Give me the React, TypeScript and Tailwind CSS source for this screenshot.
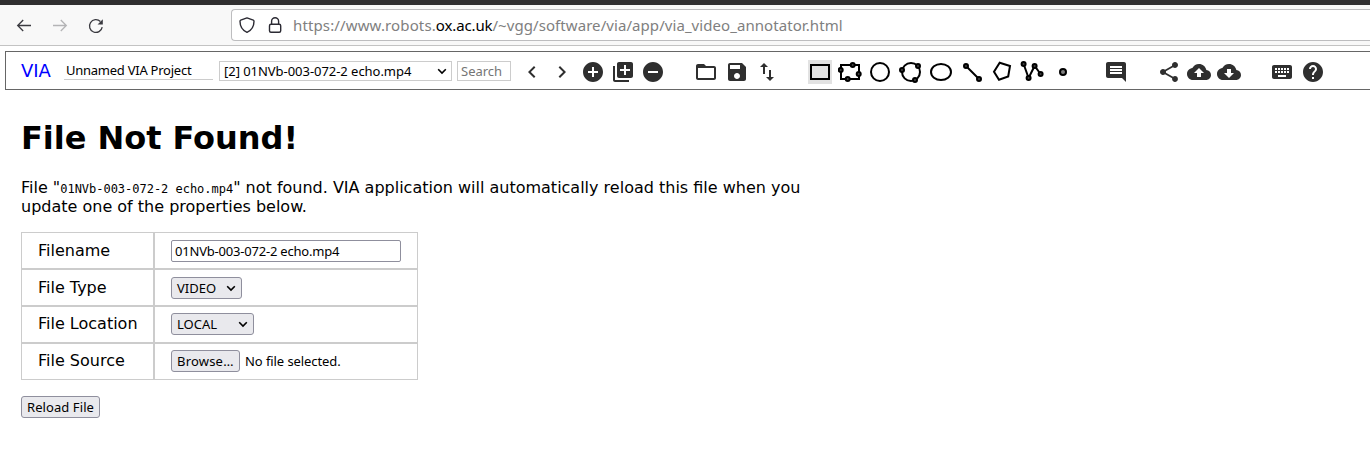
import type { ReactNode } from 'react';

const CIRCLE = 'M12 2C6.48 2 2 6.48 2 12s4.48 10 10 10 10-4.48 10-10S17.52 2 12 2z';
const CLOUD =
  'M19.35 10.04C18.67 6.59 15.64 4 12 4 9.11 4 6.6 5.64 5.35 8.04 2.34 8.36 0 10.91 0 14c0 3.31 2.69 6 6 6h13c2.76 0 5-2.24 5-5 0-2.64-2.05-4.78-4.65-4.96z';

const ICONS = {
  prev: 'M15.41 7.41L14 6l-6 6 6 6 1.41-1.41L10.83 12z',
  next: 'M10 6L8.59 7.41 13.17 12l-4.58 4.59L10 18l6-6z',
  add: CIRCLE + 'm5 11h-4v4h-2v-4H7v-2h4V7h2v4h4v2z',
  addMany:
    'M4 6H2v14c0 1.1.9 2 2 2h14v-2H4V6zm16-4H8c-1.1 0-2 .9-2 2v12c0 1.1.9 2 2 2h12c1.1 0 2-.9 2-2V4c0-1.1-.9-2-2-2zm-1 9h-4v4h-2v-4H9V9h4V5h2v4h4v2z',
  remove: CIRCLE + 'm5 11H7v-2h10v2z',
  open: 'M20 6h-8l-2-2H4c-1.1 0-1.99.9-1.99 2L2 18c0 1.1.9 2 2 2h16c1.1 0 2-.9 2-2V8c0-1.1-.9-2-2-2zm0 12H4V8h16v10z',
  save: 'M17 3H5c-1.11 0-2 .9-2 2v14c0 1.1.89 2 2 2h14c1.1 0 2-.9 2-2V7l-4-4zm-5 16c-1.66 0-3-1.34-3-3s1.34-3 3-3 3 1.34 3 3-1.34 3-3 3zm3-10H5V5h10v4z',
  transfer: 'M16 17.01V10h-2v7.01h-3L15 21l4-3.99h-3zM9 3L5 6.99h3V14h2V6.99h3L9 3z',
  comment:
    'M21.99 4c0-1.1-.89-2-1.99-2H4c-1.1 0-2 .9-2 2v12c0 1.1.9 2 2 2h14l4 4-.01-18zM18 14H6v-2h12v2zm0-3H6V9h12v2zm0-3H6V6h12v2z',
  share:
    'M18 16.08c-.76 0-1.44.3-1.96.77L8.91 12.7c.05-.23.09-.46.09-.7s-.04-.47-.09-.7l7.05-4.11c.54.5 1.25.81 2.04.81 1.66 0 3-1.34 3-3s-1.34-3-3-3-3 1.34-3 3c0 .24.04.47.09.7L8.04 9.81C7.5 9.31 6.79 9 6 9c-1.66 0-3 1.34-3 3s1.34 3 3 3c.79 0 1.5-.31 2.04-.81l7.12 4.16c-.05.21-.08.43-.08.65 0 1.61 1.31 2.92 2.92 2.92s2.92-1.31 2.92-2.92-1.31-2.92-2.92-2.92z',
  upload: CLOUD + 'M14 13v4h-4v-4H7l5-5 5 5h-3z',
  download: CLOUD + 'M17 13l-5 5-5-5h3V9h4v4h3z',
  keyboard:
    'M20 5H4c-1.1 0-1.99.9-1.99 2L2 17c0 1.1.9 2 2 2h16c1.1 0 2-.9 2-2V7c0-1.1-.9-2-2-2zm-9 3h2v2h-2V8zm0 3h2v2h-2v-2zM8 8h2v2H8V8zm0 3h2v2H8v-2zm-1 2H5v-2h2v2zm0-3H5V8h2v2zm9 7H8v-2h8v2zm0-4h-2v-2h2v2zm0-3h-2V8h2v2zm3 3h-2v-2h2v2zm0-3h-2V8h2v2z',
  help:
    CIRCLE +
    'm1 17h-2v-2h2v2zm2.07-7.75l-.9.92C13.45 12.9 13 13.5 13 15h-2v-.5c0-1.1.45-2.1 1.17-2.83l1.24-1.26c.37-.36.59-.86.59-1.41 0-1.1-.9-2-2-2s-2 .9-2 2H8c0-2.21 1.79-4 4-4s4 1.79 4 4c0 .88-.36 1.68-.93 2.25z',
};

function Icon({ name }: { name: keyof typeof ICONS }) {
  return (
    <button type="button" aria-label={name} className="size-6 shrink-0">
      <svg viewBox="0 0 24 24" className="size-6" fill="#2f2f2f" fillRule="evenodd">
        <path d={ICONS[name]} />
      </svg>
    </button>
  );
}

function Shape({ selected, points = [], children }: { selected?: boolean; points?: number[][]; children?: ReactNode }) {
  return (
    <button type="button" className={selected ? 'size-6 shrink-0 bg-[#e2e2e2]' : 'size-6 shrink-0'}>
      <svg viewBox="0 0 24 24" className="size-6" fill="none" stroke="#000" strokeWidth="2">
        {children}
        {points.map(([x, y]) => (
          <circle key={x} cx={x} cy={y} r="2" fill="#444" strokeWidth="2" />
        ))}
      </svg>
    </button>
  );
}

function Chevron() {
  return (
    <svg viewBox="0 0 10 10" className="size-[10px] shrink-0" fill="none" stroke="#000" strokeWidth="1.6">
      <path d="M1.2 3.2 5 7l3.8-3.8" />
    </svg>
  );
}

const control =
  "flex h-[22px] items-center rounded-[3px] border border-[#8f8f9d] bg-[#e9e9ed] px-[5px] font-['Noto_Sans',sans-serif] text-[13px] leading-none";

function Row({ label, raised, children }: { label: string; raised?: boolean; children: ReactNode }) {
  return (
    <div className="flex h-[37px]">
      <div className={'w-[133px] border border-[#ccc] pl-4 leading-[19px] ' + (raised ? 'pt-[7px]' : 'pt-2')}>{label}</div>
      <div className={'flex w-[264px] items-center border border-[#ccc] pl-4 ' + (raised ? 'pb-px' : 'pt-px')}>{children}</div>
    </div>
  );
}

export default function App() {
  return (
    <div className="h-[455px] w-full overflow-hidden bg-white font-['DejaVu_Sans',sans-serif] text-base text-black">
      <div className="h-[5px] bg-[#302f30]" />
      <header className="flex h-[41px] items-center border-b border-[#c3c3c3] bg-[#f8f8f8]">
        <nav className="flex w-[231px] shrink-0 items-center pl-4 pt-px">
          <svg viewBox="0 0 16 16" className="size-4" fill="none" stroke="#3a3a40" strokeWidth="1.3">
            <path d="M15 7.500H1.700M7.200 2 1.700 7.500l5.500 5.500" />
          </svg>
          <svg viewBox="0 0 16 16" className="ml-5 size-4" fill="none" stroke="#b4b4b6" strokeWidth="1.3">
            <path d="M1 7.500h13.300M8.800 2l5.500 5.500-5.500 5.500" />
          </svg>
          <svg viewBox="0 0 16 16" className="ml-5 size-4" fill="none" stroke="#3a3a40" strokeWidth="1.3">
            <path d="M14.2 9.1A6.4 6.4 0 1 1 12.4 3.5" />
            <path d="M14.8 1.200v5.200H9.600z" fill="#3a3a40" stroke="none" />
          </svg>
        </nav>
        <div className="flex h-8 flex-1 items-center rounded-l border border-r-0 border-[#bdbdbf] bg-white pl-[7px]">
          <svg viewBox="0 0 16 16" className="size-4" fill="none" stroke="#2b2a33" strokeWidth="1.4" strokeLinejoin="round">
            <path d="M8 .9 14.3 3.2c.5.2.7.5.7 1C15 9.200 12 13.500 8 15.300 4 13.500 1 9.200 1 4.200c0-.5.200-.8.700-1z" />
          </svg>
          <svg viewBox="0 0 16 16" className="ml-3 size-4" fill="none" stroke="#2b2a33" strokeWidth="1.4">
            <rect x="2.500" y="7.300" width="11.200" height="8" rx="1.500" />
            <path d="M4.600 7V4.300a3.500 3.500 0 0 1 7 0V7" />
          </svg>
          <div className="ml-[10px] flex whitespace-pre font-['Noto_Sans',sans-serif] text-[15px] leading-5 text-[#808080]">
            <span className="tracking-[0.13px]">https://www.robots.</span>
            <span className="tracking-[-0.13px] text-black">ox.ac.uk</span>
            <span className="tracking-[0.07px]">/~vgg/software/via/app/via_video_annotator.html</span>
          </div>
        </div>
      </header>

      <div className="pl-[5px] pt-[5px]">
        <div className="flex h-[39px] items-center border border-r-0 border-[#666] pl-[15px] font-['Noto_Sans',sans-serif] text-[13px] leading-none">
          <a className="w-[43px] font-['DejaVu_Sans',sans-serif] text-[18px] text-[#00f]">VIA</a>
          <div className="flex h-[19px] w-[149px] items-center border-b border-[#ccc] pl-0.5 pt-px tracking-[-0.25px]">
            Unnamed VIA Project
          </div>
          <div className="ml-1.5 flex h-5 w-[233px] items-center justify-between border border-[#ccc] pl-1 pr-1 pt-px">
            <span className="whitespace-nowrap tracking-[-0.04px]">[2] 01NVb-003-072-2 echo.mp4</span>
            <Chevron />
          </div>
          <div className="ml-[5px] flex h-5 w-[54px] items-center border border-[#ccc] pl-[3px] pt-px text-[#757575]">Search</div>
          <div className="ml-[9px] flex gap-[6.300px] pt-0.5">
            <Icon name="prev" />
            <Icon name="next" />
            <Icon name="add" />
            <Icon name="addMany" />
            <Icon name="remove" />
          </div>
          <div className="ml-[29px] flex gap-[6.400px] pt-0.5">
            <Icon name="open" />
            <Icon name="save" />
            <Icon name="transfer" />
          </div>
          <div className="ml-[28.700px] flex gap-[6.400px] pt-0.5">
            <Shape selected>
              <rect x="3" y="5" width="18" height="14" />
            </Shape>
            <Shape points={[[14.7, 5], [20.7, 14], [9.7, 19], [2.700, 10]]}>
              <rect x="3" y="5" width="18" height="14" />
            </Shape>
            <Shape>
              <circle cx="12" cy="12" r="9" />
            </Shape>
            <Shape points={[[19, 6], [16, 20], [3, 10]]}>
              <circle cx="12" cy="12" r="9" />
            </Shape>
            <Shape>
              <ellipse cx="12" cy="12" rx="10" ry="8" />
            </Shape>
            <Shape points={[[6, 6], [19, 19]]}>
              <path d="m6 6 13 13" />
            </Shape>
            <Shape>
              <path d="M9.700 2.800 20 6l-1.800 10.500-9.200 3.300L4 11.700z" />
            </Shape>
            <Shape points={[[3.600, 4], [8.600, 18], [14.600, 6], [20.600, 14]]}>
              <path d="m3.600 4 5 14 6-12 6 8" />
            </Shape>
            <Shape>
              <circle cx="12" cy="12" r="3" fill="#808080" />
            </Shape>
          </div>
          <div className="ml-[29px] flex pt-0.5">
            <Icon name="comment" />
          </div>
          <div className="ml-[29px] flex gap-[6.200px] pt-0.5">
            <Icon name="share" />
            <Icon name="upload" />
            <Icon name="download" />
          </div>
          <div className="ml-[29px] flex gap-[6.700px] pt-0.5">
            <Icon name="keyboard" />
            <Icon name="help" />
          </div>
        </div>
      </div>

      <main className="pl-[21px] pt-[29px]">
        <h1 className="text-[32px] font-bold leading-[38px] tracking-[-0.03px]">File Not Found!</h1>
        <p className="mt-[21px] w-[800px] leading-[19px]">
          File "<span className="font-['DejaVu_Sans_Mono',monospace] text-[12px] leading-none tracking-[-0.02px]">01NVb-003-072-2 echo.mp4</span>" not found. VIA
          application will automatically reload this file when you update one of the properties below.
        </p>
        <div className="mt-4 w-[397px]">
          <Row label="Filename">
            <div className="flex h-[22px] w-[230px] items-center rounded-[2px] border border-[#8f8f9d] pl-[3px] font-['Noto_Sans',sans-serif] text-[13px] leading-none tracking-[-0.2px]">
              01NVb-003-072-2 echo.mp4
            </div>
          </Row>
          <Row label="File Type">
            <div className={control + ' w-[71px] justify-between'}>
              VIDEO <Chevron />
            </div>
          </Row>
          <Row label="File Location" raised>
            <div className={control + ' w-[83px] justify-between'}>
              LOCAL <Chevron />
            </div>
          </Row>
          <Row label="File Source" raised>
            <button type="button" className={control + ' w-[69px] tracking-[0.2px]'}>
              Browse…
            </button>
            <span className="ml-[5px] font-['Noto_Sans',sans-serif] text-[13px] leading-none tracking-[-0.080px]">No file selected.</span>
          </Row>
        </div>
        <button type="button" className={control + ' mt-4 w-[79px] whitespace-nowrap tracking-[0.080px]'}>
          Reload File
        </button>
      </main>
    </div>
  );
}
